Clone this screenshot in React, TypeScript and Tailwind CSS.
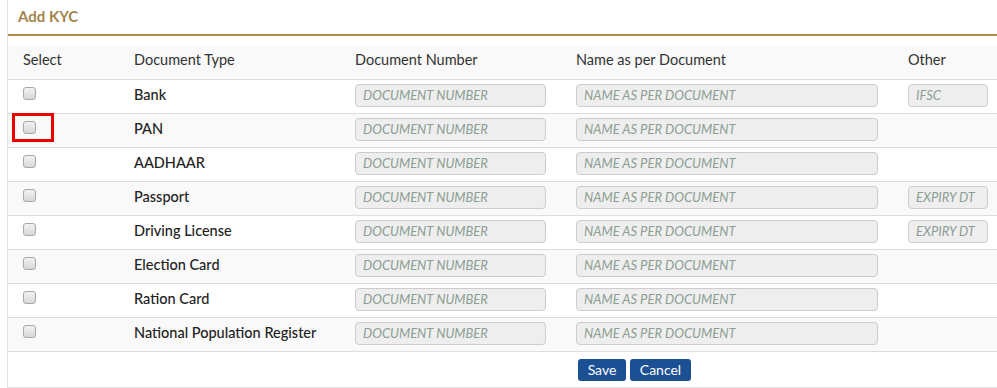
import React from 'react';

const docs = [
    { label: 'Bank', other: 'IFSC' },
    { label: 'PAN' },
    { label: 'AADHAAR' },
    { label: 'Passport', other: 'EXPIRY DT' },
    { label: 'Driving License', other: 'EXPIRY DT' },
    { label: 'Election Card' },
    { label: 'Ration Card' },
    { label: 'National Population Register' },
];

const cols = 'grid grid-cols-[118px_221px_221px_332px_1fr]';
const inputCls =
    'h-[23px] rounded-[4px] border border-[#cccccc] bg-[#eeeeee] px-[7px] text-[13px] italic text-[#333] placeholder:text-[#8c9e92] outline-none';

export default function App() {
    return (
        <div className="h-[388px] w-[997px] bg-white font-['Lato','Open_Sans',sans-serif] text-[14.5px] text-[#333333]">
            <div className="ml-[7px] flex h-[388px] flex-col border-b border-l border-[#e2e2e2]">
                {/* Title */}
                <div className="flex h-[34px] items-center pb-[1px] pl-[10px]">
                    <span className="text-[15px] font-bold text-[#a3844c]">Add KYC</span>
                </div>
                <div className="h-[2px] bg-[#ad8c4e]" />

                <div className="mt-[10px]">
                    {/* Header */}
                    <div className={`${cols} h-[34px] items-center border-b border-[#dddddd] bg-[#f9f9f9] pb-[5px]`}>
                        <div className="pl-[15px]">Select</div>
                        <div className="pl-2">Document Type</div>
                        <div className="pl-2">Document Number</div>
                        <div className="pl-2">Name as per Document</div>
                        <div className="pl-2">Other</div>
                    </div>

                    {docs.map((d, i) => (
                        <div
                            key={d.label}
                            className={`${cols} h-[34px] items-center border-b border-[#dddddd] pb-[4px] ${i % 2 === 1 ? 'bg-[#f9f9f9]' : 'bg-white'}`}
                        >
                            <div className="relative flex h-[30px] items-start pl-[15px] pt-[7px]">
                                <span className="block h-[13px] w-[13px] rounded-[3px] border border-[#a8a8a8] bg-gradient-to-b from-[#f2f2f2] to-[#d8d8d8]" />
                                {d.label === 'PAN' && (
                                    <span className="absolute left-[4px] top-[-1px] h-[29px] w-[42px] border-[3px] border-[#ee0000]" />
                                )}
                            </div>
                            <div className="pl-2 font-medium text-[#222222]">{d.label}</div>
                            <div className="pl-2">
                                <input className={`${inputCls} w-[191px]`} placeholder="DOCUMENT NUMBER" />
                            </div>
                            <div className="pl-2">
                                <input className={`${inputCls} w-[302px]`} placeholder="NAME AS PER DOCUMENT" />
                            </div>
                            <div className="pl-2">
                                {d.other && <input className={`${inputCls} w-[80px]`} placeholder={d.other} />}
                            </div>
                        </div>
                    ))}

                    {/* Actions */}
                    <div className={`${cols} h-[35px] items-center`}>
                        <div />
                        <div />
                        <div />
                        <div className="flex gap-[4px] pl-[10px]">
                            <button className="h-[22px] w-[48px] rounded-[3px] bg-[#1b5194] text-[14px] text-white">Save</button>
                            <button className="h-[22px] w-[61px] rounded-[3px] bg-[#1b5194] text-[14px] text-white">Cancel</button>
                        </div>
                    </div>
                </div>
            </div>
        </div>
    );
}
